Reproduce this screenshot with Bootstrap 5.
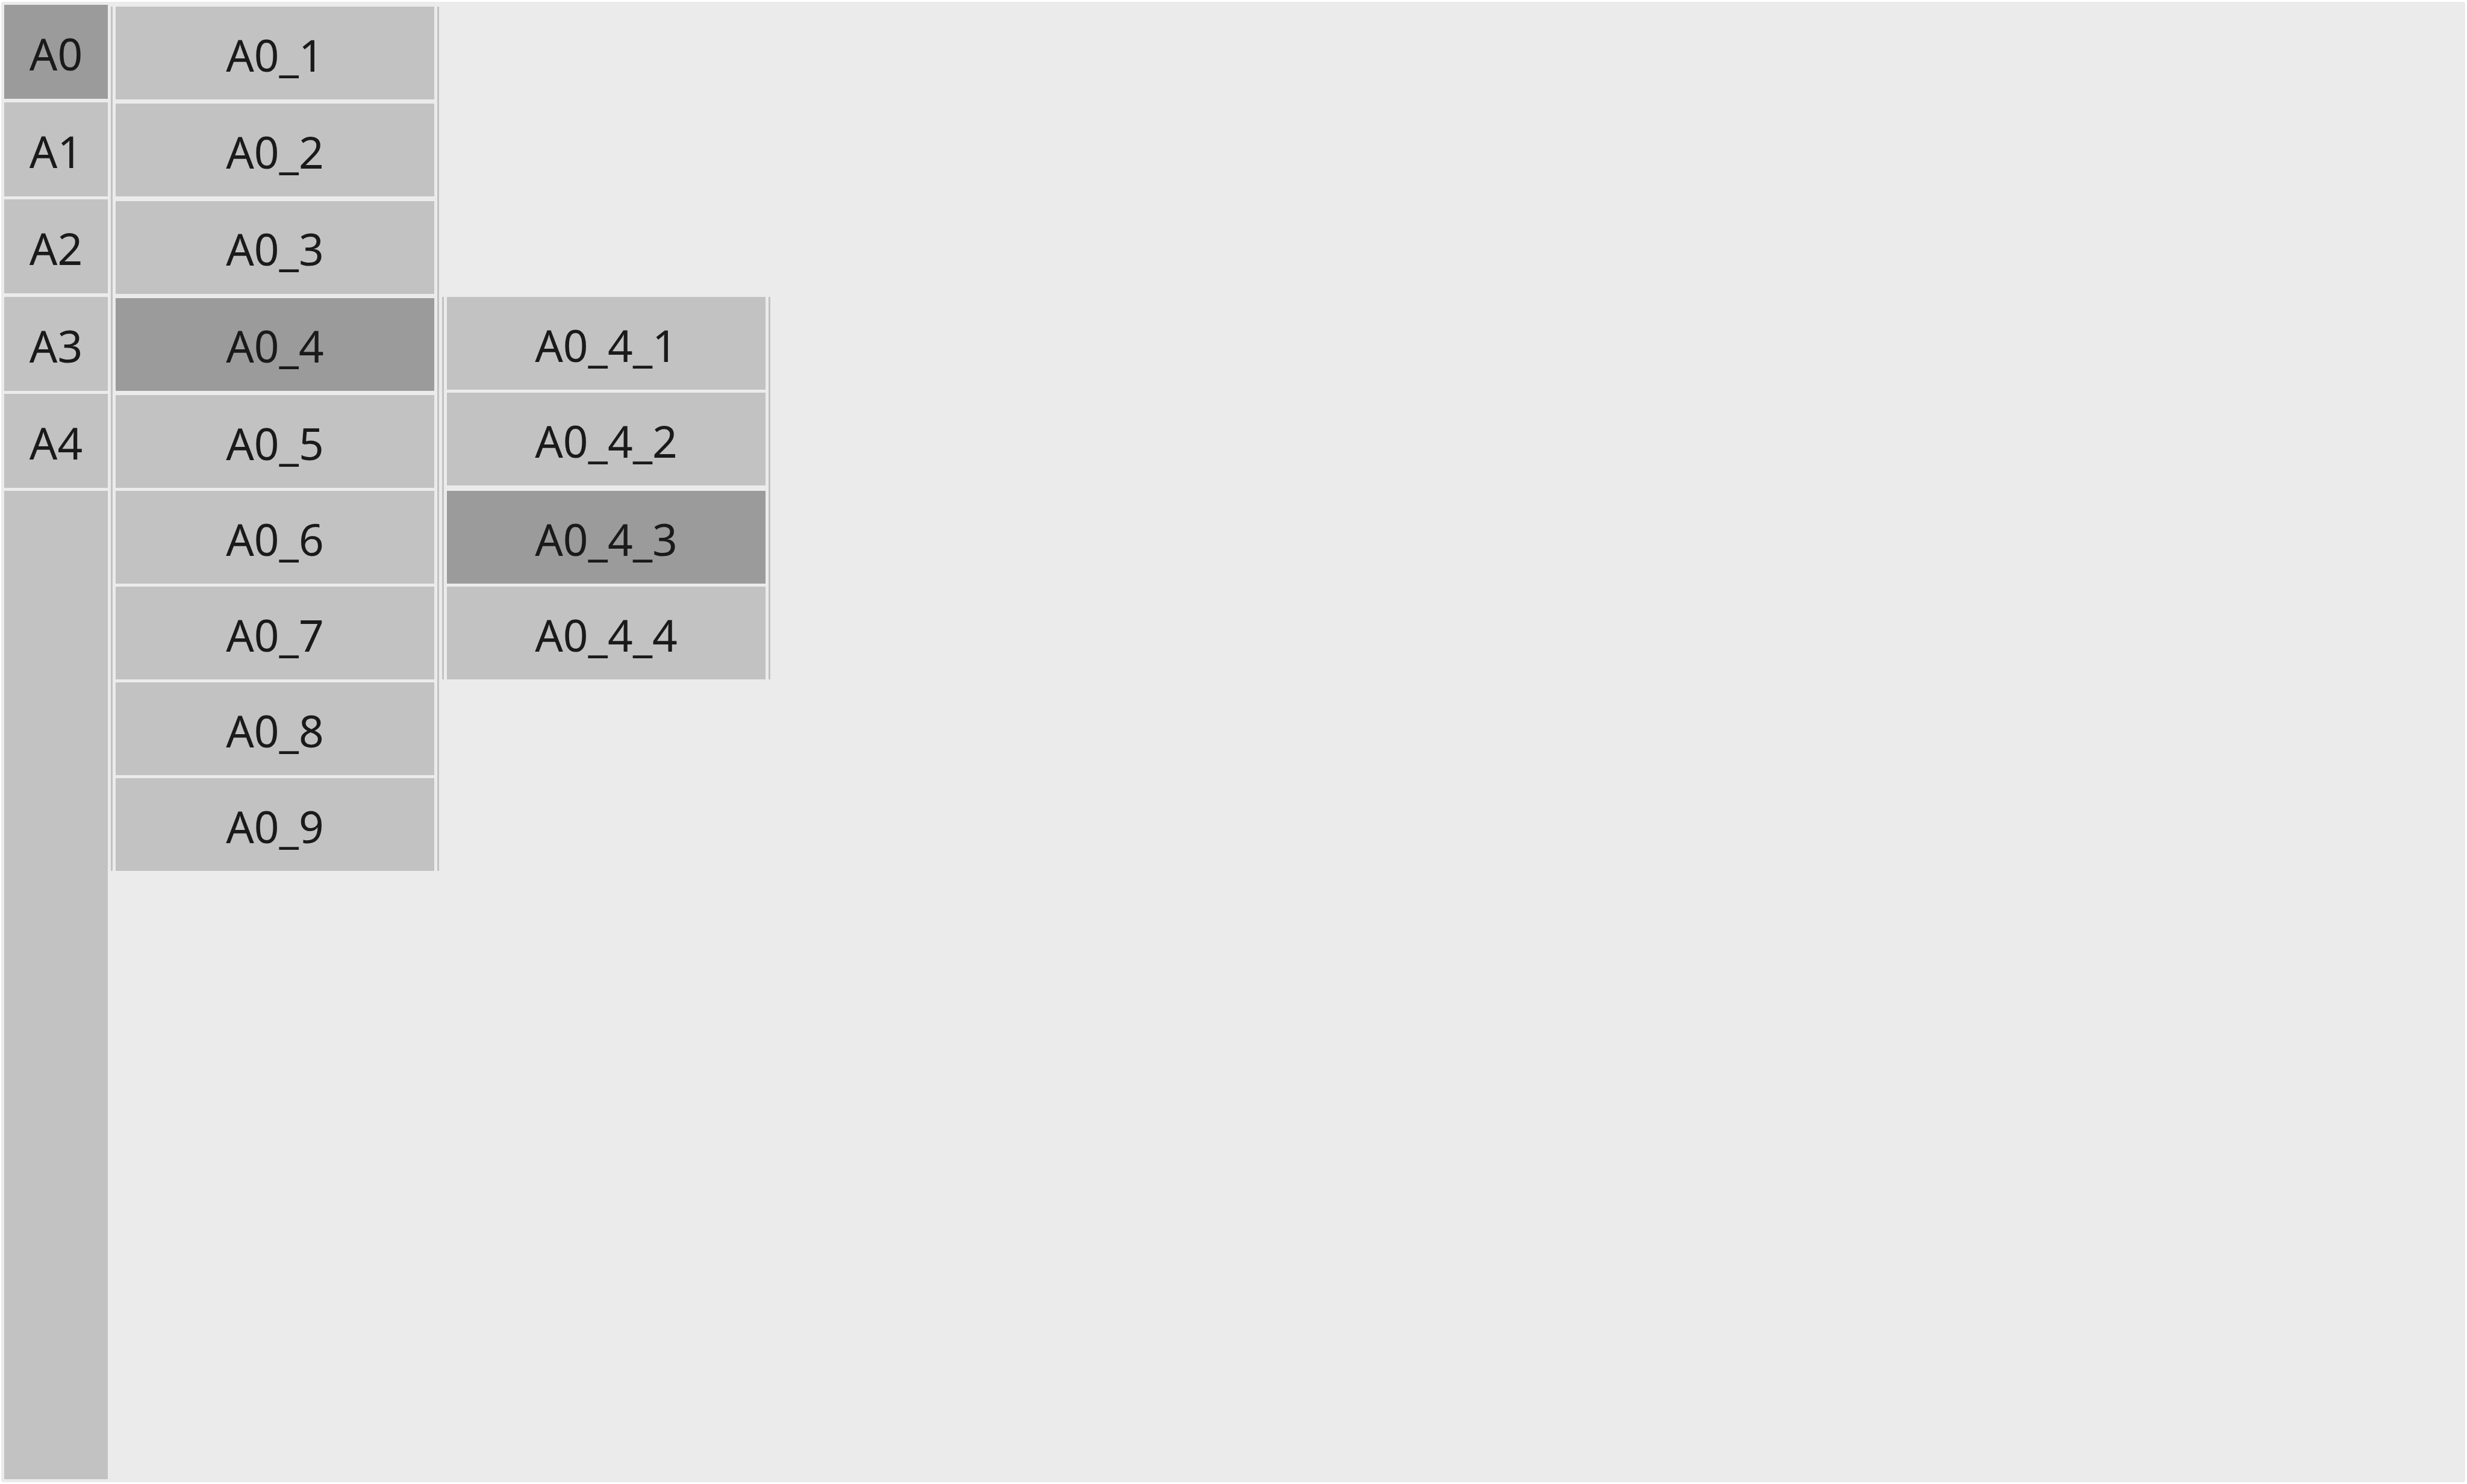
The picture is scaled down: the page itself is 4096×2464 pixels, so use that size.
<!DOCTYPE html>
<html lang="en">
<head>
<meta charset="utf-8">
<meta name="viewport" content="width=device-width, initial-scale=1">
<title>Cascading menu</title>
<link href="https://cdn.jsdelivr.net/npm/bootstrap@5.3.0/dist/css/bootstrap.min.css" rel="stylesheet">
<style>
  :root { --panel: #ebebeb; --item: #c2c2c2; --chosen: #9b9b9b; }
  body { background: #fff; padding: 3px 3px 3px 2px; font-family: "Noto Sans", "Open Sans", sans-serif; }
  .shell { background: var(--panel); border-radius: 4px; padding: 5px; gap: 5px; }
  .menu-item {
    display: flex; align-items: center; justify-content: center;
    height: 154px; padding: 5px 0 0; border: 0; border-radius: 0;
    background: var(--item); color: #1a1a1a;
    font-size: 73px; line-height: 100px;
  }
  .menu-item:hover { background: #b4b4b4; }
  .menu-item.chosen { background: var(--chosen); }
  .rail { width: 172px; gap: 5px; }
  .rail-list { height: 802px; }
  .rail .menu-item { height: 156px; padding-top: 6px; }
  .rail-fill { background: var(--item); }
  .flyout { width: 545px; padding: 0 5px; border: solid var(--item); border-width: 0 3px; gap: 5px; }
  .first-level { margin-top: 3px; }
  .spread { height: 799px; }
  .second-level { margin-top: 485px; }
</style>
<script src="https://cdn.jsdelivr.net/npm/bootstrap@5.3.0/dist/js/bootstrap.bundle.min.js"></script>
</head>
<body class="min-vh-100 d-flex m-0">
<main class="shell d-flex flex-grow-1 align-items-start">
  <nav class="rail d-flex flex-column align-self-stretch flex-shrink-0" aria-label="Main">
    <div class="rail-list d-flex flex-column justify-content-between">
      <button type="button" class="menu-item chosen">A0</button>
      <button type="button" class="menu-item">A1</button>
      <button type="button" class="menu-item">A2</button>
      <button type="button" class="menu-item">A3</button>
      <button type="button" class="menu-item">A4</button>
    </div>
    <div class="rail-fill flex-grow-1"></div>
  </nav>
  <nav class="flyout first-level d-flex flex-column flex-shrink-0" aria-label="A0">
    <div class="spread d-flex flex-column justify-content-between">
      <button type="button" class="menu-item">A0_1</button>
      <button type="button" class="menu-item">A0_2</button>
      <button type="button" class="menu-item">A0_3</button>
      <button type="button" class="menu-item chosen">A0_4</button>
      <button type="button" class="menu-item">A0_5</button>
    </div>
    <button type="button" class="menu-item">A0_6</button>
    <button type="button" class="menu-item">A0_7</button>
    <button type="button" class="menu-item">A0_8</button>
    <button type="button" class="menu-item">A0_9</button>
  </nav>
  <nav class="flyout second-level d-flex flex-column flex-shrink-0" aria-label="A0_4">
    <button type="button" class="menu-item">A0_4_1</button>
    <button type="button" class="menu-item mb-1">A0_4_2</button>
    <button type="button" class="menu-item chosen">A0_4_3</button>
    <button type="button" class="menu-item">A0_4_4</button>
  </nav>
</main>
</body>
</html>
